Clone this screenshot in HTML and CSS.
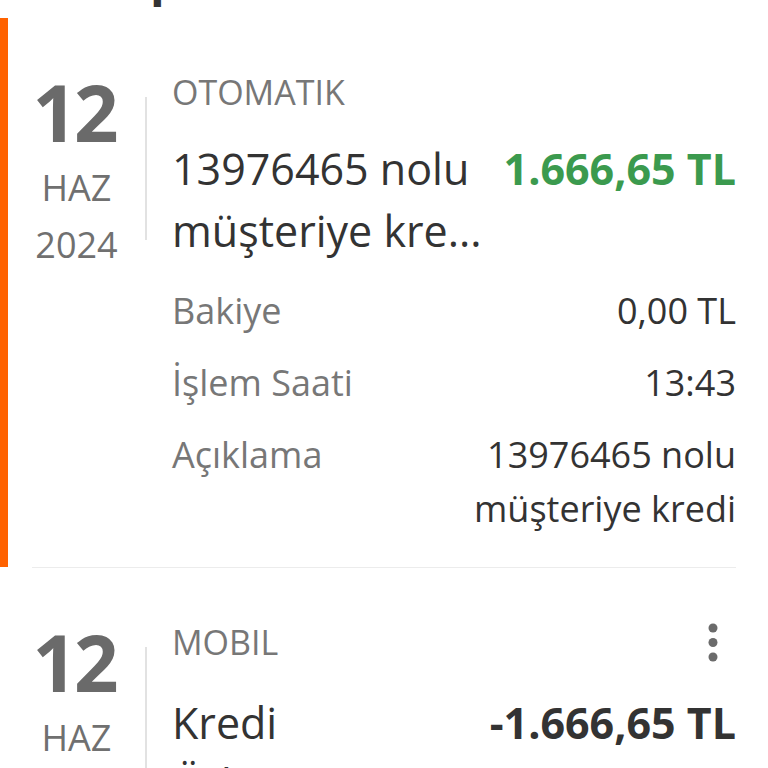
FILE: index.html
```html
<!DOCTYPE html>
<html lang="tr">
<head>
<meta charset="utf-8">
<title>Hesap Hareketleri</title>
<link rel="stylesheet" href="styles.css">
</head>
<body>
<div class="page">
  <h1 class="page-title">Hesap Hareketleri</h1>

  <div class="txn txn--active">
    <div class="date">
      <div class="date-text">
        <div class="day">12</div>
        <div class="month">HAZ</div>
        <div class="year">2024</div>
      </div>
      <div class="date-divider"></div>
    </div>
    <div class="txn-body">
      <div class="category-row"><span class="category">OTOMATIK</span></div>
      <div class="headline">
        <div class="title"><span class="title-line">13976465 nolu</span><span class="title-line">müşteriye kre...</span></div>
        <div class="amount amount--positive">1.666,65 TL</div>
      </div>
      <dl class="details">
        <div class="detail-row"><dt>Bakiye</dt><dd>0,00 TL</dd></div>
        <div class="detail-row"><dt>İşlem Saati</dt><dd>13:43</dd></div>
        <div class="detail-row"><dt>Açıklama</dt><dd>13976465 nolu müşteriye kredi</dd></div>
      </dl>
    </div>
  </div>

  <hr class="separator">

  <div class="txn">
    <div class="date">
      <div class="date-text">
        <div class="day">12</div>
        <div class="month">HAZ</div>
        <div class="year">2024</div>
      </div>
      <div class="date-divider"></div>
    </div>
    <div class="txn-body">
      <div class="category-row">
        <span class="category">MOBIL</span>
        <svg class="kebab" width="24" height="48" viewBox="0 0 24 48" aria-label="Diğer">
          <circle cx="12" cy="8" r="4.5"/>
          <circle cx="12" cy="22.5" r="4.5"/>
          <circle cx="12" cy="37" r="4.5"/>
        </svg>
      </div>
      <div class="headline">
        <div class="title"><span class="title-line">Kredi</span><span class="title-line">Ödemesi</span></div>
        <div class="amount">-1.666,65 TL</div>
      </div>
      <dl class="details">
        <div class="detail-row"><dt>Bakiye</dt><dd>-1.666,65 TL</dd></div>
        <div class="detail-row"><dt>İşlem Saati</dt><dd>13:44</dd></div>
      </dl>
    </div>
  </div>
</div>
</body>
</html>
```

FILE: styles.css
```css
* {
  box-sizing: border-box;
}

html, body {
  margin: 0;
  padding: 0;
  background: #ffffff;
}

body {
  font-family: "Open Sans", "Noto Sans", sans-serif;
  color: #333333;
}

.page {
  width: 768px;
  overflow: hidden;
}

.page-title {
  margin: -51px 0 13px 32px;
  font-size: 48px;
  line-height: 56px;
  font-weight: 700;
  color: #333333;
}

.txn {
  display: flex;
  border-left: 8px solid transparent;
  padding: 52px 32px 31px 0;
}

.txn--active {
  border-left-color: #ff6200;
}

.date {
  display: flex;
  flex: none;
}

.date-text {
  width: 137px;
  margin-top: 3px;
  text-align: center;
  color: #707070;
}

.day {
  font-size: 78px;
  line-height: 78px;
  font-weight: 700;
  letter-spacing: -3px;
  padding-right: 5px;
  color: #6a6a6a;
}

.month {
  margin-top: 8px;
  font-size: 36px;
  line-height: 57px;
}

.year {
  font-size: 36px;
  line-height: 57px;
}

.date-divider {
  width: 2px;
  height: 143px;
  margin-top: 27px;
  background: #e2e2e2;
}

.txn-body {
  flex: 1;
  min-width: 0;
  padding-left: 25px;
}

.category-row {
  display: flex;
  justify-content: space-between;
  align-items: flex-start;
}

.category {
  font-size: 34px;
  line-height: 44px;
  color: #777777;
}

.kebab {
  display: block;
  margin-right: 11px;
  fill: #6b6b6b;
}

.headline {
  display: flex;
  justify-content: space-between;
  gap: 24px;
  margin-top: 24px;
}

.title {
  flex: 1 1 auto;
  min-width: 0;
  display: flex;
  flex-direction: column;
  font-size: 43px;
  line-height: 62px;
  color: #333333;
}

.title-line {
  white-space: nowrap;
}

.amount {
  flex: none;
  font-size: 43px;
  line-height: 62px;
  font-weight: 700;
  color: #333333;
}

.amount--positive {
  color: #3b9a4e;
}

.details {
  margin: 22px 0 0;
  display: flex;
  flex-direction: column;
  gap: 18px;
}

.detail-row {
  display: flex;
  justify-content: space-between;
  align-items: flex-start;
  font-size: 36px;
  line-height: 54px;
}

.detail-row dt {
  color: #777777;
}

.detail-row dd {
  margin: 0;
  max-width: 290px;
  text-align: right;
  color: #333333;
}

.separator {
  margin: 0 32px;
  border: 0;
  height: 1px;
  background: #ececec;
}
```
